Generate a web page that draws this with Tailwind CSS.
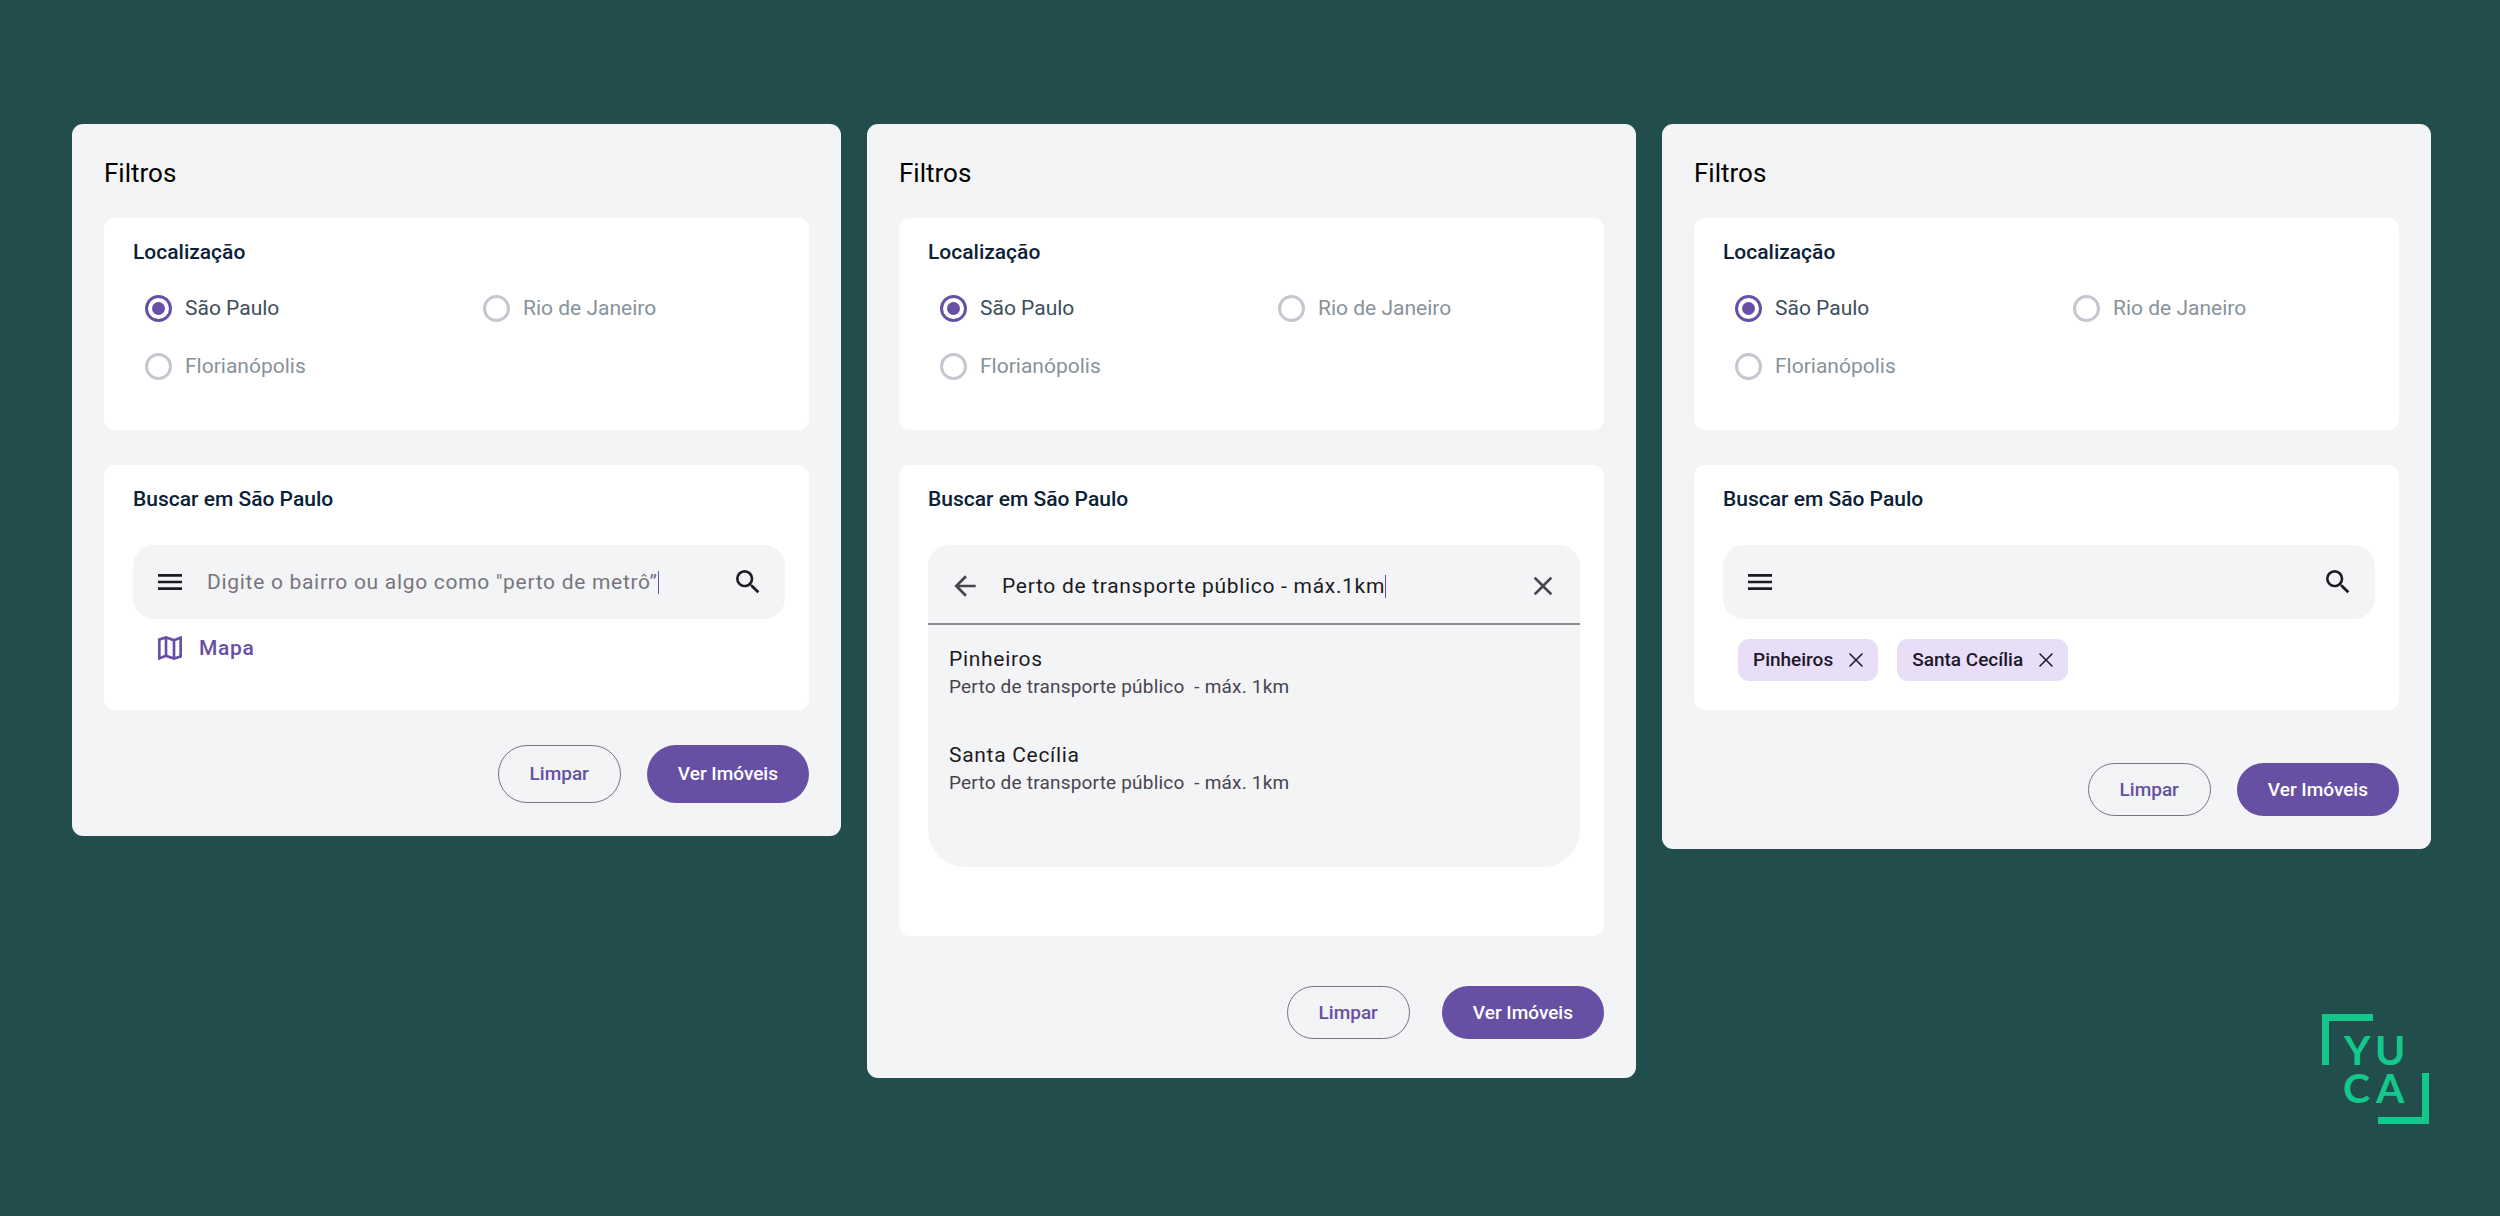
<!DOCTYPE html>
<html lang="pt-BR">
<head>
    <meta charset="UTF-8">
    <meta name="viewport" content="width=device-width, initial-scale=1.0">
    <title>Yuca – Filtros</title>
    <script src="https://cdn.jsdelivr.net/npm/@tailwindcss/browser@4"></script>
</head>
<body class="min-h-screen bg-[#214e4c] font-[Roboto,sans-serif] text-[21px] leading-7">
    <!-- Shared icons -->
    <svg class="hidden">
        <symbol id="icon-menu" viewBox="0 0 24 24"><path d="M3 18h18v-2H3v2zm0-5h18v-2H3v2zm0-7v2h18V6H3z"/></symbol>
        <symbol id="icon-search" viewBox="0 0 24 24"><path d="M15.5 14h-.79l-.28-.27A6.471 6.471 0 0 0 16 9.5 6.5 6.5 0 1 0 9.5 16c1.61 0 3.09-.59 4.23-1.57l.27.28v.79l5 4.99L20.49 19l-4.99-5zm-6 0C7.01 14 5 11.99 5 9.5S7.01 5 9.5 5 14 7.01 14 9.5 11.99 14 9.5 14z"/></symbol>
        <symbol id="icon-back" viewBox="0 0 24 24"><path d="M20 11H7.83l5.59-5.59L12 4l-8 8 8 8 1.41-1.41L7.83 13H20v-2z"/></symbol>
        <symbol id="icon-close" viewBox="0 0 24 24"><path d="M19 6.41 17.59 5 12 10.59 6.41 5 5 6.41 10.59 12 5 17.59 6.41 19 12 13.41 17.59 19 19 17.59 13.41 12z"/></symbol>
        <symbol id="icon-close-thin" viewBox="0 0 18 18"><path d="M14.25 4.56 13.44 3.75 9 8.19 4.56 3.75 3.75 4.56 8.19 9l-4.44 4.44.81.81L9 9.81l4.44 4.44.81-.81L9.81 9z"/></symbol>
        <symbol id="icon-map" viewBox="0 0 24 24"><path d="M15 21 9 18.9 3 21.2V4.9L9 3l6 2.1 6-2.3v16.3L15 21zM14 18.53V6.87l-4-1.4v11.66l4 1.4zM16 18.55l3-1.01V5.7l-3 1.16v11.69zM5 18.3l3-1.16V5.45L5 6.46V18.3z" fill-rule="evenodd"/></symbol>
    </svg>

    <main class="grid grid-cols-3 items-start gap-[26px] pt-[124px] pl-[72px] pr-[69px]">
        <!-- Empty search -->
        <form class="rounded-[11px] bg-[#f3f4f6] px-8 pt-[33px] pb-[33px]">
            <h1 class="text-[26px] leading-8 text-black">Filtros</h1>

            <fieldset class="mt-[29px] rounded-[11px] bg-white pt-5 pr-6 pb-[35px] pl-[29px]">
                <legend class="float-left w-full font-medium text-[#0b2136]">Localização</legend>
                <div class="clear-both grid grid-cols-[338px_1fr] pt-[13px] pl-3">
                    <label class="flex h-[58px] items-center gap-[13px] text-[#3e4e59]">
                        <input type="radio" name="city-a" checked class="size-[27px] appearance-none rounded-full border-[3px] border-[#cac4d0] p-1 checked:border-[#6750a4] checked:bg-[#6750a4] bg-clip-content">
                        São Paulo
                    </label>
                    <label class="flex h-[58px] items-center gap-[13px] text-[#87929a]">
                        <input type="radio" name="city-a" class="size-[27px] appearance-none rounded-full border-[3px] border-[#cac4d0] p-1 checked:border-[#6750a4] checked:bg-[#6750a4] bg-clip-content">
                        Rio de Janeiro
                    </label>
                    <label class="flex h-[58px] items-center gap-[13px] text-[#87929a]">
                        <input type="radio" name="city-a" class="size-[27px] appearance-none rounded-full border-[3px] border-[#cac4d0] p-1 checked:border-[#6750a4] checked:bg-[#6750a4] bg-clip-content">
                        Florianópolis
                    </label>
                </div>
            </fieldset>

            <section class="mt-[35px] rounded-[11px] bg-white pt-5 pr-6 pb-[46px] pl-[29px]">
                <h2 class="font-medium text-[#0b2136]">Buscar em São Paulo</h2>
                <div class="mt-8 flex h-[74px] items-center rounded-[21px] bg-[#f3f4f6] px-[21px] text-[#1c1b1f]">
                    <button type="button" aria-label="Menu"><svg class="size-8 fill-current"><use href="#icon-menu"/></svg></button>
                    <input type="text" aria-label="Buscar em São Paulo" placeholder="Digite o bairro ou algo como &quot;perto de metrô”" class="ml-[21px] field-sizing-content tracking-[0.7px] outline-none placeholder:text-[#79747e]">
                    <span class="h-[23px] w-px bg-[#6750a4]"></span>
                    <button type="button" aria-label="Buscar" class="ml-auto"><svg class="size-8 fill-current"><use href="#icon-search"/></svg></button>
                </div>
                <a href="#" class="mt-[13px] flex items-center gap-[13px] pl-[21px] font-medium tracking-[0.7px] text-[#6750a4]">
                    <svg class="size-8 fill-current"><use href="#icon-map"/></svg>
                    Mapa
                </a>
            </section>

            <div class="mt-[35px] flex justify-end gap-[26px] text-[19px] font-medium">
                <button type="reset" class="h-[58px] rounded-full border border-[#79747e] px-[31px] text-[#6750a4]">Limpar</button>
                <button type="submit" class="h-[58px] rounded-full bg-[#6750a4] px-[31px] text-white">Ver Imóveis</button>
            </div>
        </form>

        <!-- Search with suggestions open -->
        <form class="rounded-[11px] bg-[#f3f4f6] px-8 pt-[33px] pb-[39px]">
            <h1 class="text-[26px] leading-8 text-black">Filtros</h1>

            <fieldset class="mt-[29px] rounded-[11px] bg-white pt-5 pr-6 pb-[35px] pl-[29px]">
                <legend class="float-left w-full font-medium text-[#0b2136]">Localização</legend>
                <div class="clear-both grid grid-cols-[338px_1fr] pt-[13px] pl-3">
                    <label class="flex h-[58px] items-center gap-[13px] text-[#3e4e59]">
                        <input type="radio" name="city-b" checked class="size-[27px] appearance-none rounded-full border-[3px] border-[#cac4d0] p-1 checked:border-[#6750a4] checked:bg-[#6750a4] bg-clip-content">
                        São Paulo
                    </label>
                    <label class="flex h-[58px] items-center gap-[13px] text-[#87929a]">
                        <input type="radio" name="city-b" class="size-[27px] appearance-none rounded-full border-[3px] border-[#cac4d0] p-1 checked:border-[#6750a4] checked:bg-[#6750a4] bg-clip-content">
                        Rio de Janeiro
                    </label>
                    <label class="flex h-[58px] items-center gap-[13px] text-[#87929a]">
                        <input type="radio" name="city-b" class="size-[27px] appearance-none rounded-full border-[3px] border-[#cac4d0] p-1 checked:border-[#6750a4] checked:bg-[#6750a4] bg-clip-content">
                        Florianópolis
                    </label>
                </div>
            </fieldset>

            <section class="mt-[35px] rounded-[11px] bg-white pt-5 pr-6 pb-[69px] pl-[29px]">
                <h2 class="font-medium text-[#0b2136]">Buscar em São Paulo</h2>
                <div class="mt-8 rounded-t-[21px] rounded-b-[37px] bg-[#f3f4f6] pb-[70px] tracking-[0.7px] text-[#1c1b1f]">
                    <div class="flex h-[80px] items-center border-b-2 border-[#8f8b94] px-[21px] pt-1">
                        <button type="button" aria-label="Voltar" class="text-[#49454f]"><svg class="size-8 fill-current"><use href="#icon-back"/></svg></button>
                        <input type="text" aria-label="Buscar em São Paulo" value="Perto de transporte público - máx.1km" class="ml-[21px] field-sizing-content tracking-[0.7px] outline-none">
                        <span class="h-[23px] w-px bg-[#6750a4]"></span>
                        <button type="button" aria-label="Fechar" class="ml-auto text-[#49454f]"><svg class="size-8 fill-current"><use href="#icon-close"/></svg></button>
                    </div>
                    <ul class="mt-5 space-y-10 px-[21px]">
                        <li>
                            <p>Pinheiros</p>
                            <p class="text-[19px] tracking-[0.2px] whitespace-pre text-[#49454f]">Perto de transporte público  - máx. 1km</p>
                        </li>
                        <li>
                            <p>Santa Cecília</p>
                            <p class="text-[19px] tracking-[0.2px] whitespace-pre text-[#49454f]">Perto de transporte público  - máx. 1km</p>
                        </li>
                    </ul>
                </div>
            </section>

            <div class="mt-[50px] flex justify-end gap-8 text-[19px] font-medium">
                <button type="reset" class="h-[53px] rounded-full border border-[#79747e] px-[31px] text-[#6750a4]">Limpar</button>
                <button type="submit" class="h-[53px] rounded-full bg-[#6750a4] px-[31px] text-white">Ver Imóveis</button>
            </div>
        </form>

        <!-- Chosen neighbourhoods -->
        <div class="flex flex-col">
            <form class="rounded-[11px] bg-[#f3f4f6] px-8 pt-[33px] pb-[33px]">
                <h1 class="text-[26px] leading-8 text-black">Filtros</h1>

                <fieldset class="mt-[29px] rounded-[11px] bg-white pt-5 pr-6 pb-[35px] pl-[29px]">
                    <legend class="float-left w-full font-medium text-[#0b2136]">Localização</legend>
                    <div class="clear-both grid grid-cols-[338px_1fr] pt-[13px] pl-3">
                        <label class="flex h-[58px] items-center gap-[13px] text-[#3e4e59]">
                            <input type="radio" name="city-c" checked class="size-[27px] appearance-none rounded-full border-[3px] border-[#cac4d0] p-1 checked:border-[#6750a4] checked:bg-[#6750a4] bg-clip-content">
                            São Paulo
                        </label>
                        <label class="flex h-[58px] items-center gap-[13px] text-[#87929a]">
                            <input type="radio" name="city-c" class="size-[27px] appearance-none rounded-full border-[3px] border-[#cac4d0] p-1 checked:border-[#6750a4] checked:bg-[#6750a4] bg-clip-content">
                            Rio de Janeiro
                        </label>
                        <label class="flex h-[58px] items-center gap-[13px] text-[#87929a]">
                            <input type="radio" name="city-c" class="size-[27px] appearance-none rounded-full border-[3px] border-[#cac4d0] p-1 checked:border-[#6750a4] checked:bg-[#6750a4] bg-clip-content">
                            Florianópolis
                        </label>
                    </div>
                </fieldset>

                <section class="mt-[35px] rounded-[11px] bg-white pt-5 pr-6 pb-[29px] pl-[29px]">
                    <h2 class="font-medium text-[#0b2136]">Buscar em São Paulo</h2>
                    <div class="mt-8 flex h-[74px] items-center rounded-[21px] bg-[#f3f4f6] px-[21px] text-[#1c1b1f]">
                        <button type="button" aria-label="Menu"><svg class="size-8 fill-current"><use href="#icon-menu"/></svg></button>
                        <input type="text" aria-label="Buscar em São Paulo" class="mx-[21px] min-w-0 flex-1 tracking-[0.7px] outline-none">
                        <button type="button" aria-label="Buscar"><svg class="size-8 fill-current"><use href="#icon-search"/></svg></button>
                    </div>
                    <div class="mt-5 flex gap-[19px] pl-[15px] text-[19px] font-medium text-[#1d192b]">
                        <button type="button" class="flex h-[42px] items-center gap-[11px] rounded-[11px] bg-[#e8def8] pr-[10px] pl-[15px]">
                            Pinheiros
                            <svg class="size-6 fill-current"><use href="#icon-close-thin"/></svg>
                        </button>
                        <button type="button" class="flex h-[42px] items-center gap-[11px] rounded-[11px] bg-[#e8def8] pr-[10px] pl-[15px]">
                            Santa Cecília
                            <svg class="size-6 fill-current"><use href="#icon-close-thin"/></svg>
                        </button>
                    </div>
                </section>

                <div class="mt-[53px] flex justify-end gap-[26px] text-[19px] font-medium">
                    <button type="reset" class="h-[53px] rounded-full border border-[#79747e] px-[31px] text-[#6750a4]">Limpar</button>
                    <button type="submit" class="h-[53px] rounded-full bg-[#6750a4] px-[31px] text-white">Ver Imóveis</button>
                </div>
            </form>

            <!-- Yuca logo -->
            <svg viewBox="0 0 107 110" class="mt-[165px] mr-[2px] h-[110px] w-[107px] self-end fill-[#14c88c]" role="img" aria-label="Yuca">
                <path d="M0 0H51V7H7V51H0zM107 110H56V103H100V59H107z"/>
                <g class="font-[Lato,sans-serif] text-[41px] font-bold">
                    <text x="22" y="51">Y</text>
                    <text x="53" y="51">U</text>
                    <text x="21" y="89">C</text>
                    <text x="54" y="89">A</text>
                </g>
            </svg>
        </div>
    </main>
</body>
</html>
